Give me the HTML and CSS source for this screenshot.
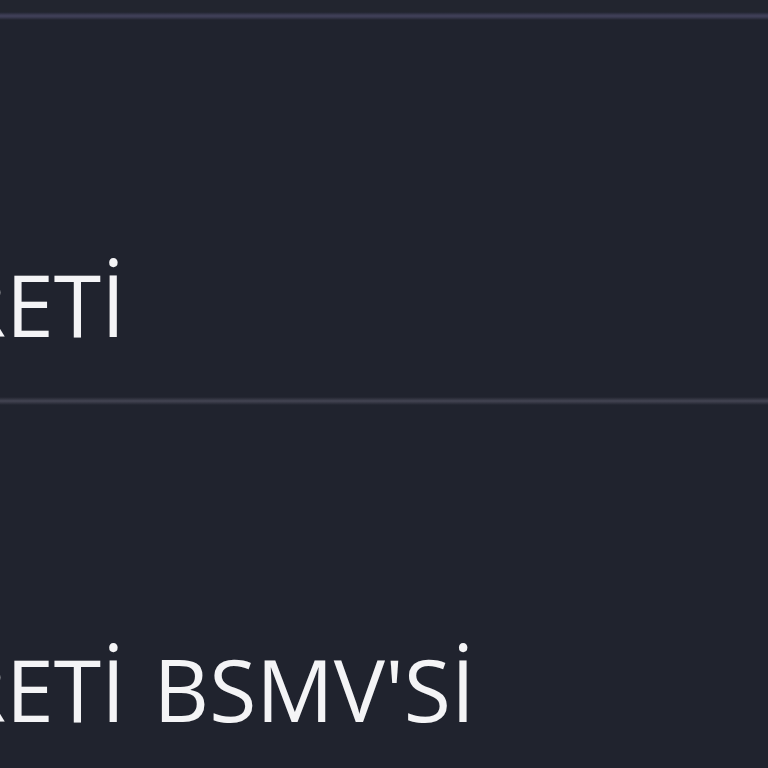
FILE: index.html
```html
<!DOCTYPE html>
<html lang="tr">
<head>
  <meta charset="UTF-8" />
  <meta name="viewport" content="width=device-width, initial-scale=1" />
  <title>Ücretler</title>
  <link rel="stylesheet" href="styles.css">
</head>
<body>
  <div class="fee-list">
    <div class="strip"></div>
    <div class="rule rule-top"></div>
    <div class="fee-row">
      <span class="fee-name">RETİ</span>
    </div>
    <div class="rule"></div>
    <div class="fee-row">
      <span class="fee-name">RETİ BSMV'Sİ</span>
    </div>
  </div>
</body>
</html>
```

FILE: styles.css
```css
html, body {
  margin: 0;
  padding: 0;
  height: 100%;
  background: #20232e;
  font-family: 'Open Sans', 'Noto Sans', sans-serif;
  overflow: hidden;
}

.fee-list {
  display: flex;
  flex-direction: column;
}

.strip {
  height: 12px;
  background: #22252f;
}

/* soft divider between rows */
.rule {
  height: 8px;
  background: linear-gradient(to bottom, rgba(64, 65, 82, 0) 0%, #40414f 45%, #40414f 55%, rgba(64, 65, 82, 0) 100%);
}

.rule-top {
  background: linear-gradient(to bottom, rgba(62, 62, 86, 0) 0%, #3e3e56 40%, #3e3e56 60%, rgba(62, 62, 86, 0) 100%);
}

.fee-row {
  height: 377px;
  box-sizing: border-box;
  display: flex;
  align-items: flex-end;
  padding-bottom: 50px;
}

.fee-name {
  margin-left: -47px;
  font-size: 86px;
  line-height: 1;
  word-spacing: 6px;
  color: #f4f4f6;
  white-space: nowrap;
}
```
